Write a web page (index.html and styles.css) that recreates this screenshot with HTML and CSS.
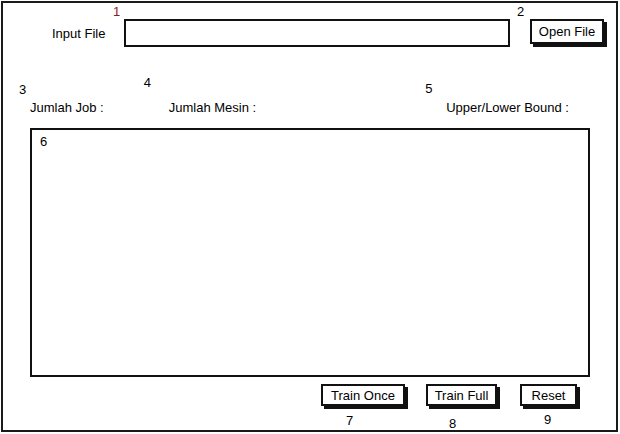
FILE: index.html
```html
<!DOCTYPE html>
<html>
<head>
<meta charset="utf-8">
<link rel="stylesheet" href="styles.css">
</head>
<body>
<div class="frame">
  <div class="row-file">
    <span class="label label-input">Input File</span>
    <div class="field">
      <span class="num num-1">1</span>
    </div>
    <div class="btn btn-open">
      <span class="num num-2">2</span>
      Open File
    </div>
  </div>
  <div class="row-info">
    <span class="label info info-job"><span class="num num-3">3</span>Jumlah Job :</span>
    <span class="label info info-mesin"><span class="num num-4">4</span>Jumlah Mesin :</span>
    <span class="label info info-bound"><span class="num num-5">5</span>Upper/Lower Bound :</span>
  </div>
  <div class="output">6</div>
  <div class="row-actions">
    <div class="btn btn-once">Train Once<span class="num num-7">7</span></div>
    <div class="btn btn-full">Train Full<span class="num num-8">8</span></div>
    <div class="btn btn-reset">Reset<span class="num num-9">9</span></div>
  </div>
</div>
</body>
</html>
```

FILE: styles.css
```css
* { box-sizing: border-box; }

html, body {
  margin: 0;
  padding: 0;
  background: #ffffff;
}

body {
  font-family: "Liberation Sans", Arial, sans-serif;
  font-size: 13px;
  color: #000;
  width: 620px;
  height: 434px;
  overflow: hidden;
}

.frame {
  margin: 1px 0 0 1px;
  width: 617px;
  height: 431px;
  border: 2px solid #1a1a1a;
  padding-top: 16px;
}

.num {
  position: absolute;
  font-size: 13px;
  line-height: 13px;
  color: #000;
}

.label {
  line-height: 15px;
  white-space: nowrap;
}

/* Row 1 */
.row-file {
  display: flex;
  align-items: flex-start;
  height: 28px;
}

.label-input {
  margin-left: 49px;
  margin-top: 7px;
  width: 72px;
}

.field {
  position: relative;
  width: 386px;
  height: 28px;
  border: 2px solid #111;
  background: #fff;
}

.num-1 {
  left: -13px;
  top: -16px;
  color: #8a1c1c;
}

.btn {
  position: relative;
  display: flex;
  align-items: center;
  justify-content: center;
  border: 2px solid #111;
  background: #fff;
  box-shadow: 3px 3px 0 #111;
  white-space: nowrap;
}

.btn-open {
  margin-left: 20px;
  width: 74px;
  height: 25px;
}

.num-2 {
  left: -15px;
  top: -16px;
}

/* Row 2 */
.row-info {
  display: flex;
  margin-top: 53px;
  height: 15px;
}

.info {
  position: relative;
}

.info-job { margin-left: 27px; }
.info-mesin { margin-left: 65px; }
.info-bound { margin-left: 190px; }

.num-3 { left: -11px; top: -17px; }
.num-4 { left: -25px; top: -24px; }
.num-5 { left: -21px; top: -18px; }

/* Output area */
.output {
  margin: 13px 0 0 27px;
  width: 560px;
  height: 249px;
  border: 2px solid #111;
  padding: 4px 0 0 8px;
  line-height: 15px;
}

/* Bottom actions */
.row-actions {
  display: flex;
  margin-top: 7px;
  padding-left: 318px;
}

.btn-once { width: 84px; height: 22px; }
.btn-full { width: 71px; height: 22px; margin-left: 21px; }
.btn-reset { width: 57px; height: 22px; margin-left: 23px; }

.num-7 { left: 23px; top: 28px; }
.num-8 { left: 21px; top: 31px; }
.num-9 { left: 22px; top: 27px; }
```
